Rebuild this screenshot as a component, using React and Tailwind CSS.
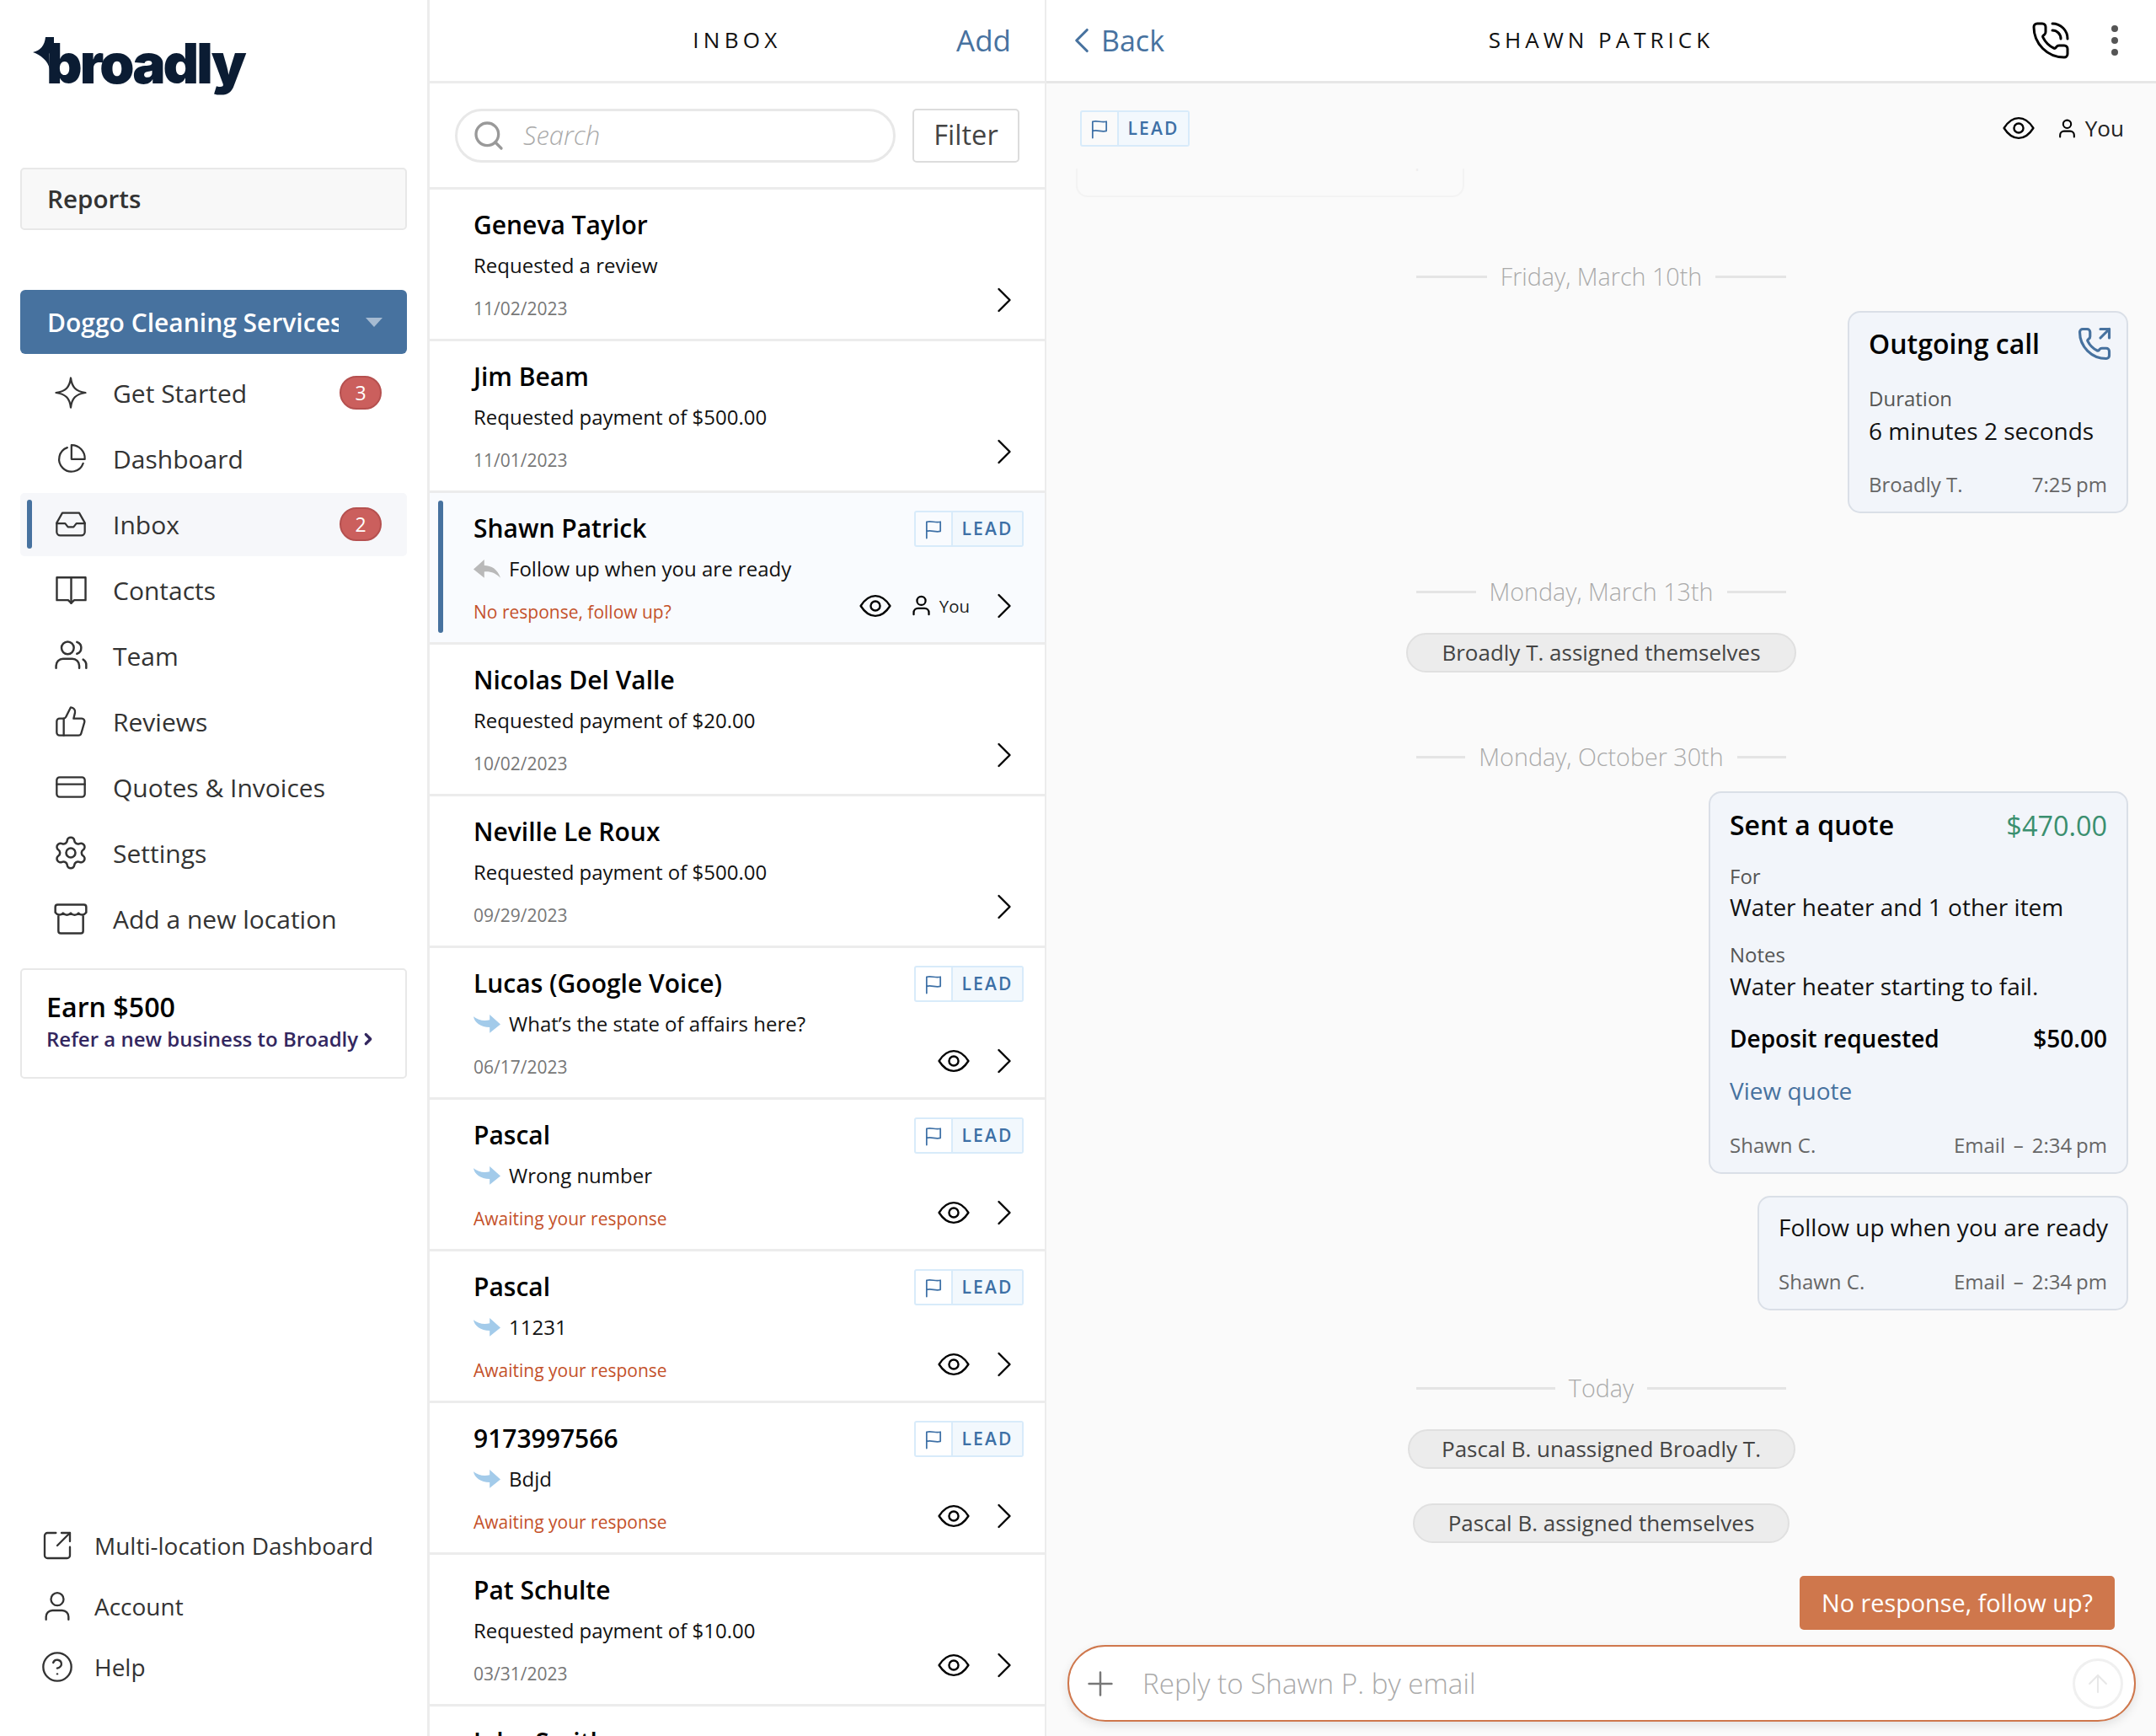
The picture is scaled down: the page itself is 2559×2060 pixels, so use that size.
import { ChevronLeft, ChevronRight, CircleHelp, CreditCard, EllipsisVertical, PhoneCall, PhoneOutgoing, Plus, Search, Settings, SquareArrowOutUpRight, ThumbsUp, ArrowUp } from "lucide-react";

function Svg({ size = 38, sw = 1.5, children, className = "" }) {
  return (
    <svg width={size} height={size} viewBox="0 0 24 24" fill="none" stroke="currentColor" strokeWidth={sw} strokeLinecap="round" strokeLinejoin="round" className={className}>
      {children}
    </svg>
  );
}

const StarIcon = (p) => <Svg {...p}><path d="M12 1.5C12.8 8 15.5 11 22.5 12C15.5 13 12.8 16 12 22.5C11.2 16 8.500 13 1.500 12C8.500 11 11.2 8 12 1.500Z" /></Svg>;
const PieIcon = (p) => <Svg {...p}><path d="M9.500 4.300A8.800 8.800 0 1 0 20.800 15.500" /><path d="M12.500 2.500V12.500H22A9.500 9.500 0 0 0 12.500 2.500Z" /></Svg>;
const InboxIcon = (p) => <Svg {...p}><path d="M6 4h12l4 7v6.500a2.500 2.500 0 0 1-2.500 2.500h-15A2.500 2.500 0 0 1 2 17.500V11z" /><path d="M2 11.500h6l2 2.500h4l2-2.500h6" /></Svg>;
const BookIcon = (p) => <Svg {...p}><path d="M2.500 3.500h19v15h-7.500L12 20.500l-2-2H2.500z" /><path d="M12 3.500v17" /></Svg>;
const TeamIcon = (p) => <Svg {...p}><circle cx="10" cy="7" r="4" /><path d="M2.500 20v-1.500A4.500 4.500 0 0 1 7 14h6a4.500 4.500 0 0 1 4.500 4.500V20" /><path d="M16 3.200a4 4 0 0 1 0 7.600" /><path d="M20 14.500a4 4 0 0 1 2 3.500v2" /></Svg>;
const StoreIcon = (p) => <Svg {...p}><path d="M3.500 3h17A1.500 1.500 0 0 1 22 4.500V8c-1.500 2-3.500 2-5 .5-1.500 1.500-3.500 1.500-5 0-1.500 1.500-3.500 1.500-5 0C5.500 10 3.500 10 2 8V4.500A1.500 1.500 0 0 1 3.500 3z" /><path d="M4 10.500V20a1.500 1.500 0 0 0 1.500 1.500h13A1.500 1.500 0 0 0 20 20v-9.500" /></Svg>;
const PersonIcon = (p) => <Svg {...p}><circle cx="12" cy="7" r="4.500" /><path d="M4 21.500v-2A4.500 4.500 0 0 1 8.500 15h7a4.500 4.500 0 0 1 4.500 4.500v2" /></Svg>;
const FlagIcon = (p) => <Svg {...p}><path d="M5 21V4.500c5-1.500 9 1.500 14 0V14c-5 1.500-9-1.500-14 0" /></Svg>;
const EyeIcon = (p) => <Svg {...p}><path d="M1 12C4.500 6.500 8.500 4.500 12 4.500S19.500 6.500 23 12C19.500 17.500 15.500 19.500 12 19.500S4.500 17.500 1 12Z" /><circle cx="12" cy="12" r="3.500" /></Svg>;

function ReplyArrow() {
  return (
    <svg width="32" height="23" viewBox="0 0 30 20" fill="#b9b9b9" preserveAspectRatio="none">
      <path d="M0 10 12 0v6c8 0 15 4 18 13-5-5-11-7-18-6.500V19z" />
    </svg>
  );
}

function SentArrow() {
  return (
    <svg width="32" height="23" viewBox="0 0 30 20" fill="#a3cbea" preserveAspectRatio="none">
      <path d="M30 10 18 0v5.500C12 7 5 6 0 2c1 6 8 11 18 11v6z" />
    </svg>
  );
}

const navItems = [
  { label: "Get Started", Icon: StarIcon, badge: "3" },
  { label: "Dashboard", Icon: PieIcon },
  { label: "Inbox", Icon: InboxIcon, badge: "2", active: true },
  { label: "Contacts", Icon: BookIcon, size: 43 },
  { label: "Team", Icon: TeamIcon, size: 44 },
  { label: "Reviews", Icon: ThumbsUp },
  { label: "Quotes & Invoices", Icon: CreditCard },
  { label: "Settings", Icon: Settings, size: 44 },
  { label: "Add a new location", Icon: StoreIcon, size: 44 },
];

const rows = [
  { name: "Geneva Taylor", text: "Requested a review", date: "11/02/2023" },
  { name: "Jim Beam", text: "Requested payment of $500.00", date: "11/01/2023" },
  { name: "Shawn Patrick", text: "Follow up when you are ready", status: "No response, follow up?", arrow: "reply", lead: true, eye: true, you: true, selected: true },
  { name: "Nicolas Del Valle", text: "Requested payment of $20.00", date: "10/02/2023" },
  { name: "Neville Le Roux", text: "Requested payment of $500.00", date: "09/29/2023" },
  { name: "Lucas (Google Voice)", text: "What’s the state of affairs here?", date: "06/17/2023", arrow: "sent", lead: true, eye: true },
  { name: "Pascal", text: "Wrong number", status: "Awaiting your response", arrow: "sent", lead: true, eye: true },
  { name: "Pascal", text: "11231", status: "Awaiting your response", arrow: "sent", lead: true, eye: true },
  { name: "9173997566", text: "Bdjd", status: "Awaiting your response", arrow: "sent", lead: true, eye: true },
  { name: "Pat Schulte", text: "Requested payment of $10.00", date: "03/31/2023", eye: true },
  { name: "John Smith", text: "", date: "" },
];

function LeadBadge() {
  return (
    <div className="flex h-[43px] w-[130px] shrink-0 overflow-hidden rounded-[3px] border-2 border-[#d8ebfa] text-[#3d70a6]">
      <div className="flex w-[44px] items-center justify-center border-r-2 border-[#d8ebfa]">
        <FlagIcon size={28} sw={1.500} />
      </div>
      <div className="flex flex-1 items-center justify-center bg-[#f2f8fd] text-[21px] font-semibold tracking-[0.1em]">LEAD</div>
    </div>
  );
}

function Sidebar() {
  return (
    <aside className="flex h-full w-[510px] shrink-0 flex-col border-r-[3px] border-[#ececec] px-[24px] pb-[46px]">
      <div className="relative ml-[31px] mt-[30px] h-[90px] w-[240px] font-['Inter',sans-serif] text-[66px] leading-[90px] font-black tracking-[-0.045em] text-[#0b1c33]">
        broadly
        <svg width="32" height="38" viewBox="0 0 32 38" fill="#0b1c33" className="absolute left-[-16px] top-[14px]">
          <path d="M0 18C9 16 14 10 15 0h10v12l-6 8 1 18C18 28 9 21 0 18Z" />
        </svg>
      </div>
      <div className="mt-[79px] flex h-[74px] items-center rounded-[5px] border-2 border-[#e8e8e8] bg-[#f8f8f8] pl-[30px] text-[29.600px] font-semibold text-[#333]">Reports</div>
      <div className="mt-[71px] flex h-[76px] items-center rounded-[6px] bg-[#47729f] pl-[32px] text-white">
        <span className="w-[346px] overflow-hidden text-[30px] font-semibold whitespace-nowrap">Doggo Cleaning Services</span>
        <span className="ml-[32px] h-0 w-0 border-x-[10px] border-t-[11px] border-x-transparent border-t-[#a6bbd2]" />
      </div>
      <nav className="mt-[7px] flex flex-col">
        {navItems.map(({ label, Icon, badge, active, size = 40 }) => (
          <div key={label} className="flex h-[78px] items-center">
            <div className={`flex h-[75px] w-full items-center rounded-[5px] ${active ? "bg-[#f6f7fa]" : ""}`}>
              <div className="flex w-[14px] justify-end">
                {active ? <span className="h-[58px] w-[6px] rounded-[3px] bg-[#47729f]" /> : null}
              </div>
              <div className="ml-[26px] flex w-[40px] justify-center text-[#333]">
                <Icon size={size} strokeWidth={1.400} sw={1.350} className="shrink-0" />
              </div>
              <span className="ml-[30px] flex-1 text-[30px] text-[#333]">{label}</span>
              {badge ? (
                <span className="mr-[30px] flex h-[40px] w-[50px] items-center justify-center rounded-full border-2 border-[#b5504f] bg-[#cb5f5d] text-[23px] font-medium text-white">{badge}</span>
              ) : null}
            </div>
          </div>
        ))}
      </nav>
      <div className="mt-[20px] h-[131px] rounded-[5px] border-2 border-[#e8e8e8] pl-[29px] pt-[22px]">
        <div className="text-[32.200px] leading-[44px] font-semibold text-black">Earn $500</div>
        <div className="flex items-center text-[24px] leading-[32px] font-semibold whitespace-nowrap text-[#33275f]">
          Refer a new business to Broadly
          <ChevronRight size={22} strokeWidth={3.500} className="ml-[1px]" />
        </div>
      </div>
      <div className="mt-auto flex flex-col text-[#333]">
        {[
          { label: "Multi-location Dashboard", Icon: SquareArrowOutUpRight },
          { label: "Account", Icon: PersonIcon },
          { label: "Help", Icon: CircleHelp },
        ].map(({ label, Icon }) => (
          <div key={label} className="flex h-[72px] items-center pl-[24px]">
            <Icon size={40} strokeWidth={1.400} sw={1.400} />
            <span className="ml-[24px] text-[28px]">{label}</span>
          </div>
        ))}
      </div>
    </aside>
  );
}

function InboxRow({ row }) {
  const { name, text, date, status, arrow, lead, eye, you, selected } = row;
  return (
    <div className={`relative flex h-[180px] shrink-0 border-b-[3px] border-[#ececec] pl-[52px] ${selected ? "bg-[#f9fbfe]" : ""}`}>
      {selected ? <span className="absolute left-[10px] top-[9px] h-[157px] w-[6px] rounded-[3px] bg-[#47729f]" /> : null}
      <div className="min-w-0 flex-1 pt-[18px]">
        <div className="h-[48px] text-[30px] leading-[48px] font-semibold text-black">{name}</div>
        <div className="flex h-[48px] items-center text-[24px] text-[#111]">
          {arrow === "reply" ? <span className="mr-[10px] flex"><ReplyArrow /></span> : null}
          {arrow === "sent" ? <span className="mr-[10px] flex"><SentArrow /></span> : null}
          {text}
        </div>
        {status ? (
          <div className="h-[55px] text-[21px] leading-[55px] text-[#c4512a]">{status}</div>
        ) : (
          <div className="h-[55px] text-[21px] leading-[55px] text-[#777]">{date}</div>
        )}
      </div>
      <div className={`flex shrink-0 flex-col items-end pr-[25px] pt-[21px] ${lead ? "pb-[23px]" : "pb-[26px]"}`}>
        {lead ? <LeadBadge /> : null}
        <div className="mt-auto mr-[16px] flex h-[40px] items-center">
          {eye ? <EyeIcon size={38} sw={1.500} className="text-black" /> : null}
          {you ? (
            <div className="ml-[22px] flex items-center">
              <PersonIcon size={27} sw={2} className="text-black" />
              <span className="ml-[8px] text-[20.400px] text-[#222]">You</span>
            </div>
          ) : null}
          {name === "John Smith" ? null : <ChevronRight size={52} strokeWidth={1.100} className="ml-[15px] mr-[-19px] text-black" />}
        </div>
      </div>
    </div>
  );
}

function InboxList() {
  return (
    <section className="flex h-full w-[730px] shrink-0 flex-col overflow-hidden">
      <header className="relative flex h-[99px] shrink-0 items-center justify-center border-b-[3px] border-[#ececec]">
        <span className="text-[26.100px] tracking-[0.2em] text-[#111]">INBOX</span>
        <span className="absolute right-[40px] text-[35px] text-[#47729f]">Add</span>
      </header>
      <div className="flex h-[126px] shrink-0 items-center border-b-[3px] border-[#ececec] pl-[30px]">
        <div className="flex h-[64px] w-[523px] items-center rounded-full border-[3px] border-[#e8e8e8] pl-[17px]">
          <Search size={40} strokeWidth={2} className="text-[#999]" />
          <span className="ml-[21px] text-[31px] font-light italic text-[#aaa]">Search</span>
        </div>
        <div className="ml-[20px] flex h-[64px] w-[127px] items-center justify-center rounded-[5px] border-2 border-[#dcdcdc] text-[32.600px] text-[#444]">Filter</div>
      </div>
      {rows.map((row, i) => <InboxRow key={i} row={row} />)}
    </section>
  );
}

function DateLine({ label, className = "" }) {
  return (
    <div className={`flex h-[40px] w-[439px] shrink-0 items-center self-center text-[28.700px] text-[#aaa] ${className}`}>
      <span className="h-[3px] flex-1 bg-[#e4e4e4]" />
      <span className="mx-[16px] font-light">{label}</span>
      <span className="h-[3px] flex-1 bg-[#e4e4e4]" />
    </div>
  );
}

function Pill({ label, className = "" }) {
  return (
    <div className={`flex h-[47px] shrink-0 items-center self-center rounded-full border-2 border-[#e0e0e0] bg-[#ececec] px-[40px] text-[26px] whitespace-nowrap text-[#444] ${className}`}>{label}</div>
  );
}

function CardFoot({ left, right, className = "" }) {
  return (
    <div className={`flex h-[32px] items-center justify-between text-[24px] text-[#666] ${className}`}>
      <span>{left}</span>
      <span className="[word-spacing:-1.300px]">{right}</span>
    </div>
  );
}

function Conversation() {
  return (
    <section className="flex h-full min-w-0 flex-1 flex-col border-l-2 border-[#ececec] bg-[#fafafa]">
      <header className="relative flex h-[99px] shrink-0 items-center border-b-[3px] border-[#e6e6e6] bg-white">
        <div className="flex items-center pl-[17px] text-[#47729f]">
          <ChevronLeft size={50} strokeWidth={1.500} />
          <span className="ml-[-2px] text-[34px]">Back</span>
        </div>
        <span className="absolute left-0 right-0 text-center text-[26.100px] tracking-[0.19em] text-[#111]">SHAWN PATRICK</span>
        <div className="ml-auto flex items-center">
          <PhoneCall size={48} strokeWidth={1.500} className="text-black" />
          <EllipsisVertical size={48} strokeWidth={2} className="ml-[28px] mr-[25px] text-[#555]" />
        </div>
      </header>
      <div className="flex min-h-0 flex-1 flex-col px-[25px] pt-[32px]">
        <div className="flex h-[43px] shrink-0 items-center justify-between pl-[15px] pr-[13px]">
          <LeadBadge />
          <div className="flex items-center">
            <EyeIcon size={38} sw={1.500} className="text-black" />
            <PersonIcon size={25} sw={2} className="ml-[26px] text-black" />
            <span className="ml-[9px] text-[26.100px] text-[#222]">You</span>
          </div>
        </div>
        <div className="ml-[10px] mt-[26px] h-[34px] w-[461px] shrink-0 overflow-hidden rounded-b-[14px] border-x-2 border-b-2 border-[#f3f3f3] px-[20px] text-[24px] leading-[16px] text-[#efefef]">
          <div className="mt-[-20px] flex justify-between"><span>Shawn C.</span><span>Text – 1:15 pm</span></div>
        </div>

        <DateLine label="Friday, March 10th" className="mt-[74px]" />
        <div className="mr-[8px] mt-[21px] h-[240px] w-[333px] shrink-0 self-end rounded-[15px] border-2 border-[#dadfe7] bg-[#f2f5fa] px-[23px] pt-[17px]">
          <div className="flex h-[40px] items-center justify-between">
            <span className="text-[32px] font-semibold text-black">Outgoing call</span>
            <PhoneOutgoing size={42} strokeWidth={1.800} className="mr-[-6px] text-[#47729f]" />
          </div>
          <div className="mt-[29px] h-[32px] text-[24px] leading-[32px] font-medium text-[#555]">Duration</div>
          <div className="mt-[4px] h-[36px] text-[28px] leading-[36px] whitespace-nowrap text-[#111]">6 minutes 2 seconds</div>
          <CardFoot left="Broadly T." right="7:25 pm" className="mt-[30px]" />
        </div>

        <DateLine label="Monday, March 13th" className="mt-[73px]" />
        <Pill label="Broadly T. assigned themselves" className="mt-[29px]" />

        <DateLine label="Monday, October 30th" className="mt-[80px]" />
        <div className="mr-[8px] mt-[21px] h-[454px] w-[498px] shrink-0 self-end rounded-[15px] border-2 border-[#dadfe7] bg-[#f2f5fa] px-[23px] pt-[18px]">
          <div className="flex h-[40px] items-center justify-between">
            <span className="text-[32px] font-semibold text-black">Sent a quote</span>
            <span className="text-[32.400px] text-[#3a8f6f]">$470.00</span>
          </div>
          <div className="mt-[25px] h-[32px] text-[24px] leading-[32px] font-medium text-[#555]">For</div>
          <div className="mt-[2px] h-[36px] text-[28px] leading-[36px] text-[#111]">Water heater and 1 other item</div>
          <div className="mt-[23px] h-[32px] text-[24px] leading-[32px] font-medium text-[#555]">Notes</div>
          <div className="mt-[3px] h-[36px] text-[28px] leading-[36px] text-[#111]">Water heater starting to fail.</div>
          <div className="mt-[24px] flex h-[40px] items-center justify-between text-[28px] font-semibold text-black">
            <span>Deposit requested</span>
            <span>$50.00</span>
          </div>
          <div className="mt-[22px] h-[40px] text-[28px] leading-[40px] text-[#47729f]">View quote</div>
          <CardFoot left="Shawn C." right="Email  –  2:34 pm" className="mt-[29px] whitespace-pre" />
        </div>
        <div className="mr-[8px] mt-[26px] h-[136px] w-[440px] shrink-0 self-end rounded-[15px] border-2 border-[#dadfe7] bg-[#f2f5fa] px-[23px] pt-[17px]">
          <div className="h-[36px] text-[28px] leading-[36px] whitespace-nowrap text-[#111]">Follow up when you are ready</div>
          <CardFoot left="Shawn C." right="Email  –  2:34 pm" className="mt-[31px] whitespace-pre" />
        </div>

        <DateLine label="Today" className="mt-[72px]" />
        <Pill label="Pascal B. unassigned Broadly T." className="mt-[29px] w-[460px] justify-center px-0" />
        <Pill label="Pascal B. assigned themselves" className="mt-[41px] w-[447px] justify-center px-0" />

        <div className="mr-[24px] mt-[39px] flex h-[64px] w-[374px] shrink-0 items-center justify-center self-end rounded-[5px] bg-[#cf774c] text-[28.800px] font-medium text-white">No response, follow up?</div>
        <div className="mt-[18px] flex h-[91px] w-[1268px] shrink-0 items-center rounded-[45px] border-2 border-[#cf774c] bg-white shadow-[0_4px_12px_rgba(0,0,0,0.1)]">
          <Plus size={46} strokeWidth={1.300} className="ml-[14px] text-[#777]" />
          <span className="ml-[27px] text-[33.200px] font-light text-[#aaa]">Reply to Shawn P. by email</span>
          <span className="ml-auto mr-[13px] flex h-[60px] w-[60px] items-center justify-center rounded-full border-[3px] border-[#f0f0f0] text-[#e8e8e8]">
            <ArrowUp size={34} strokeWidth={1.500} />
          </span>
        </div>
      </div>
    </section>
  );
}

export default function App() {
  return (
    <div className="flex h-[2060px] w-[2559px] overflow-hidden bg-white font-['Open_Sans',sans-serif]">
      <Sidebar />
      <InboxList />
      <Conversation />
    </div>
  );
}
